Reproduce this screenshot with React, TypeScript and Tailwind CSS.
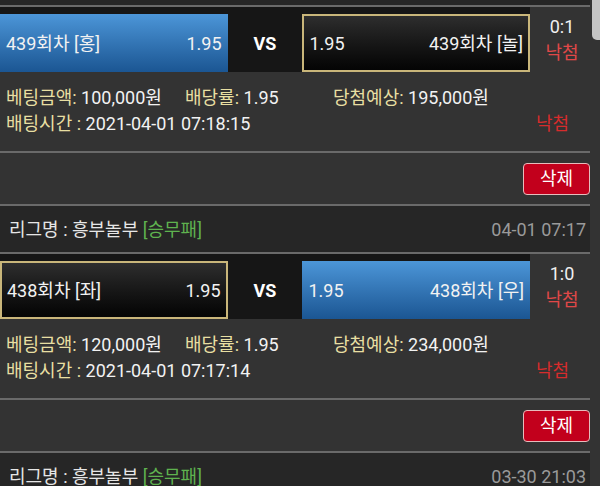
import React from "react";

type Side = { label: string; odds: string; selected: boolean };
type Bet = {
  league: string;
  date: string;
  left: Side;
  right: Side;
  score: string;
  amount: string;
  odds: string;
  expect: string;
  time: string;
};

const bets: Bet[] = [
  {
    league: "흥부놀부",
    date: "04-01 07:18",
    left: { label: "439회차 [홍]", odds: "1.95", selected: true },
    right: { label: "439회차 [놀]", odds: "1.95", selected: false },
    score: "0:1",
    amount: "100,000원",
    odds: "1.95",
    expect: "195,000원",
    time: "2021-04-01 07:18:15",
  },
  {
    league: "흥부놀부",
    date: "04-01 07:17",
    left: { label: "438회차 [좌]", odds: "1.95", selected: false },
    right: { label: "438회차 [우]", odds: "1.95", selected: true },
    score: "1:0",
    amount: "120,000원",
    odds: "1.95",
    expect: "234,000원",
    time: "2021-04-01 07:17:14",
  },
  {
    league: "흥부놀부",
    date: "03-30 21:03",
    left: { label: "437회차 [좌]", odds: "1.95", selected: false },
    right: { label: "437회차 [우]", odds: "1.95", selected: true },
    score: "1:0",
    amount: "100,000원",
    odds: "1.95",
    expect: "195,000원",
    time: "2021-03-30 21:03:10",
  },
];

function Sep() {
  return <div className="h-[2px] w-[590px] bg-[#6a6a6a]" />;
}

function TeamBox({ side, reverse }: { side: Side; reverse: boolean }) {
  const cls = side.selected
    ? "bg-gradient-to-b from-[#4c96d8] to-[#1b5693] px-[6px]"
    : "bg-gradient-to-b from-[#2e2e2e] to-[#050505] border-2 border-[#c9b67a] px-[5px]";
  return (
    <div
      className={`w-[228px] h-[58px] flex items-center justify-between text-[18px] text-[#f2f2f2] ${cls} ${
        reverse ? "flex-row-reverse" : ""
      }`}
    >
      <span>{side.label}</span>
      <span>{side.odds}</span>
    </div>
  );
}

function LeagueRow({ bet }: { bet: Bet }) {
  return (
    <>
      <Sep />
      <div className="h-[46px] w-[590px] bg-[#262626] flex items-center justify-between pl-[9px] pr-[4px] text-[18px]">
        <span className="text-[#e6e6e6]">
          리그명 : {bet.league} <span className="text-[#5fb24f]">[승무패]</span>
        </span>
        <span className="text-[#9a9a9a]">{bet.date}</span>
      </div>
    </>
  );
}

function Card({ bet, mode }: { bet: Bet; mode: "top" | "full" | "head" }) {
  if (mode === "head") {
    return (
      <div className="flex flex-col">
        <LeagueRow bet={bet} />
      </div>
    );
  }
  return (
    <div className="flex flex-col">
      {mode === "top" ? (
        <div className="h-[5px] w-[590px] bg-[#262626]" />
      ) : (
        <LeagueRow bet={bet} />
      )}
      <Sep />
      <div className="flex w-[590px]">
        <div className="w-[530px] bg-[#161616] pt-[7px] flex">
          <TeamBox side={bet.left} reverse={false} />
          <div className="w-[75px] h-[58px] flex items-center justify-center text-[18px] font-bold text-white">
            VS
          </div>
          <TeamBox side={bet.right} reverse={true} />
        </div>
        <div className="w-[60px] flex flex-col items-center pl-[4px] text-[18px]">
          <div className="mt-[9px] leading-[22px] text-[#f0f0f0]">{bet.score}</div>
          <div className="mt-[2px] leading-[26px] text-[#e04848]">낙첨</div>
        </div>
      </div>
      <div className="w-[590px] pt-[13px] pb-[14px] text-[18px] leading-[26px]">
        <div className="flex pl-[6px]">
          <span className="w-[179px] shrink-0">
            <span className="text-[#e8dfa2]">베팅금액:</span>
            <span className="text-[#f2f2f2]"> {bet.amount}</span>
          </span>
          <span className="w-[148px] shrink-0">
            <span className="text-[#e8dfa2]">배당률:</span>
            <span className="text-[#f2f2f2]"> {bet.odds}</span>
          </span>
          <span>
            <span className="text-[#e8dfa2]">당첨예상:</span>
            <span className="text-[#f2f2f2]"> {bet.expect}</span>
          </span>
        </div>
        <div className="flex justify-between pl-[6px] pr-[21px]">
          <span>
            <span className="text-[#e8dfa2]">배팅시간 :</span>
            <span className="text-[#f2f2f2]"> {bet.time}</span>
          </span>
          <span className="text-[#d62c2c]">낙첨</span>
        </div>
      </div>
      <Sep />
      <div className="h-[51px] w-[590px] flex items-center justify-end">
        <button className="w-[67px] h-[32px] rounded-[4px] border-[1.5px] border-[#e6bcbc] bg-[#c2001c] text-white text-[18px] flex items-center justify-center">
          삭제
        </button>
      </div>
    </div>
  );
}

export default function App() {
  return (
    <div
      className="relative w-[600px] h-[486px] overflow-hidden bg-[#333333]"
      style={{ fontFamily: 'Roboto, "Noto Sans CJK KR", sans-serif' }}
    >
      <div className="flex flex-col">
        {bets.map((b, i) => (
          <Card key={i} bet={b} mode={i === 0 ? "top" : i === bets.length - 1 ? "head" : "full"} />
        ))}
      </div>
      <div className="absolute top-0 right-0 w-[8px] h-[40px] bg-[#c4c4c4] rounded-bl-[5px]" />
    </div>
  );
}
